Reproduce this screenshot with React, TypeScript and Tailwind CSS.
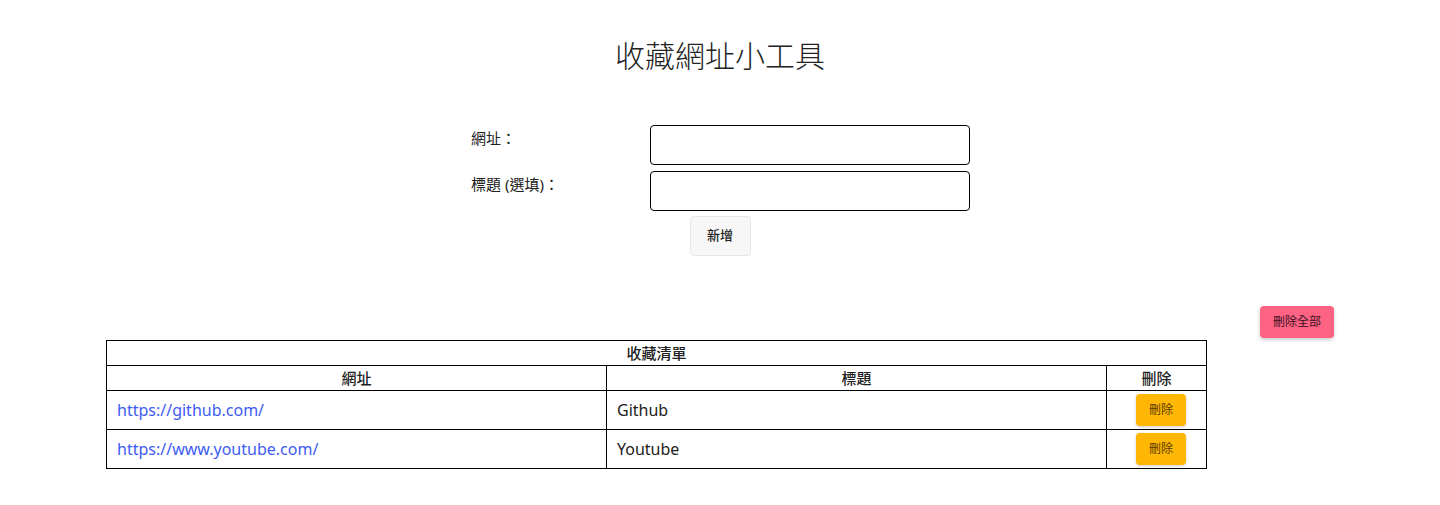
const bookmarks = [
  { url: 'https://github.com/', title: 'Github' },
  { url: 'https://www.youtube.com/', title: 'Youtube' },
]

const font = "font-['Segoe_UI','Noto_Sans','Noto_Sans_CJK_TC',sans-serif]"

export default function App() {
  return (
    <div className={`min-h-[505px] bg-white text-[#212121] ${font}`}>
      {/* Title */}
      <h1 className="pt-[38px] text-center text-[30px] leading-[36px] font-light text-[#222]">
        收藏網址小工具
      </h1>

      {/* Form */}
      <div className="mx-auto mt-[51px] w-[500px] pl-[1px]">
        <div className="grid grid-cols-[179px_320px] gap-y-[6px]">
          <label className="pt-[3px] text-[15px] leading-[20px]">網址：</label>
          <input className="h-[40px] rounded-[4px] border border-black outline-none" />
          <label className="pt-[3px] text-[15px] leading-[20px]">標題 (選填)：</label>
          <input className="h-[40px] rounded-[4px] border border-black outline-none" />
        </div>
      </div>
      <div className="mt-[5px] flex justify-center">
        <button className="h-[40px] w-[61px] rounded-[4px] border border-[#e6e6e6] bg-[#f7f7f7] text-[13px] font-medium">
          新增
        </button>
      </div>

      {/* Delete all */}
      <div className="mt-[50px] flex justify-end pr-[106px]">
        <button className="h-[32px] w-[74px] rounded-[4px] bg-[#ff6384] text-[12px] text-[#3a1020] shadow-[0_2px_4px_rgba(0,0,0,0.2)]">
          刪除全部
        </button>
      </div>

      {/* Table */}
      <table className="ml-[106px] mt-[2px] w-[1101px] border-collapse border border-black">
        <thead>
          <tr className="h-[25px]">
            <th colSpan={3} className="border border-black text-[15px] font-medium leading-[20px]">
              收藏清單
            </th>
          </tr>
          <tr className="h-[25px]">
            <th className="w-[500px] border border-black text-[15px] font-medium leading-[20px]">網址</th>
            <th className="w-[500px] border border-black text-[15px] font-medium leading-[20px]">標題</th>
            <th className="border border-black text-[15px] font-medium leading-[20px]">刪除</th>
          </tr>
        </thead>
        <tbody>
          {bookmarks.map((b) => (
            <tr key={b.url} className="h-[39px]">
              <td className="border border-black px-[10px] text-[16px]">
                <a href={b.url} className="text-[#3d5cf5]">
                  {b.url}
                </a>
              </td>
              <td className="border border-black px-[10px] text-[16px]">{b.title}</td>
              <td className="border border-black pl-[9px] text-center">
                <button className="h-[32px] w-[50px] rounded-[4px] bg-[#ffb703] text-[12px] text-[#5a3a00] shadow-[0_1px_3px_rgba(0,0,0,0.2)]">
                  刪除
                </button>
              </td>
            </tr>
          ))}
        </tbody>
      </table>
    </div>
  )
}
